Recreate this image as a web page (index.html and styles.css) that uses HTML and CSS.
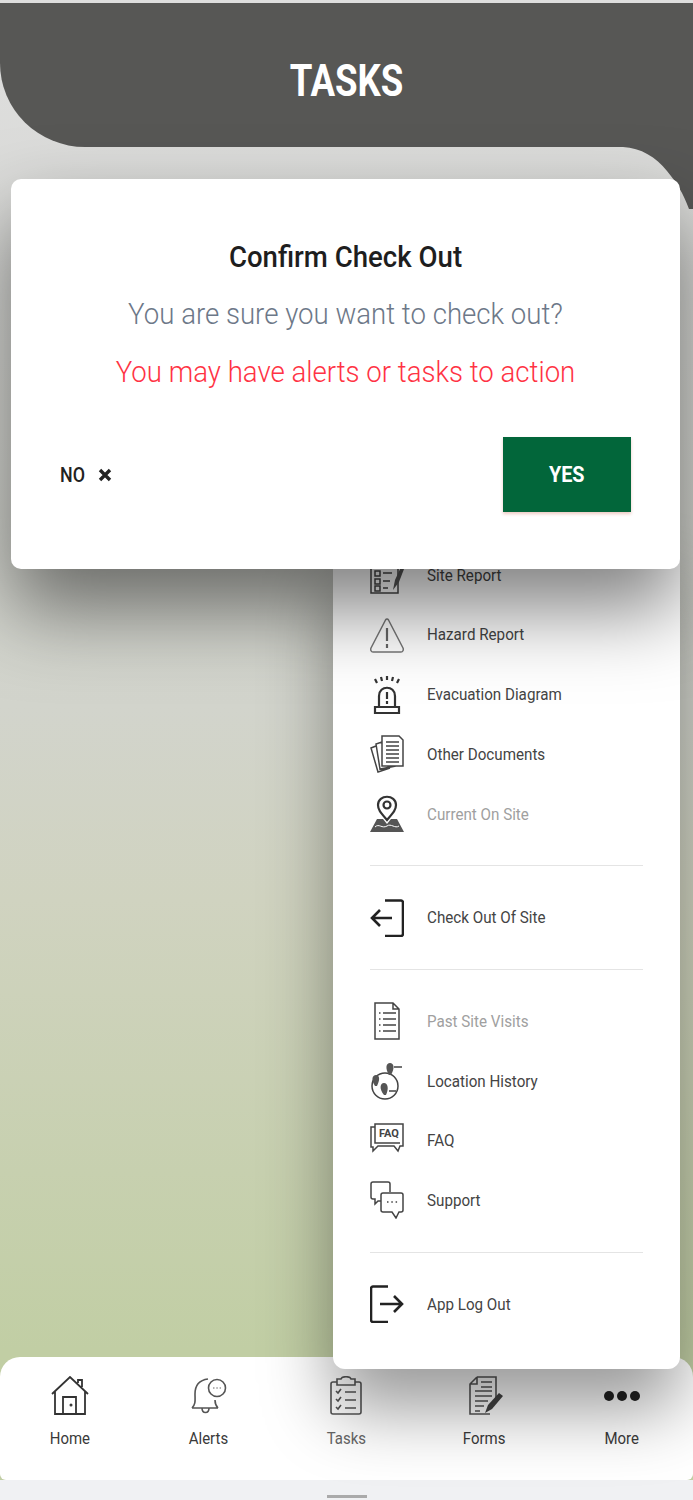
FILE: index.html
```html
<!DOCTYPE html>
<html lang="en">
<head>
  <meta charset="UTF-8">
  <meta name="viewport" content="width=device-width, initial-scale=1">
  <title>Tasks</title>
  <link rel="stylesheet" href="styles.css">
</head>
<body>
<div class="app">

  <header class="header">
    <h1 class="header-title"><span>TASKS</span></h1>
    <svg class="header-tail" width="70" height="63" viewBox="0 0 70 63"><path d="M0 0H70V62H66C60 46 54 36 44 24C33 10 18 1 0 0Z"/></svg>
  </header>

  <main class="content"></main>

  <!-- bottom tabs -->
  <nav class="tabs">
    <a class="tab">
      <svg class="tab-icon" width="38" height="40" viewBox="0 0 38 40"><path d="M1 18L19 1L37 18M4 15V38H34V15M12 38V21H25V38M27 7V4H31V11"/><circle cx="20" cy="29" r=".6"/></svg>
      <span>Home</span>
    </a>
    <a class="tab">
      <svg class="tab-icon tab-icon-soft" width="38" height="40" viewBox="0 0 38 40"><path d="M3 32C7 28 6 24 6 18C6 9 11 4 19 3M3 32H29M26 24C26 28 27 30 29 32M13 32C13 38 20 38 20 32"/><circle cx="28" cy="12" r="8.500"/><path class="dots" d="M24 12H25.500M27.300 12H28.800M30.600 12H32"/></svg>
      <span>Alerts</span>
    </a>
    <a class="tab tab-dim">
      <svg class="tab-icon tab-icon-soft" width="38" height="40" viewBox="0 0 38 40"><path d="M10 6H6C5 6 4 7 4 8V36C4 37 5 38 6 38H32C33 38 34 37 34 36V8C34 7 33 6 32 6H28M10 3H14C15 0 23 0 24 3H28V9H10ZM9 15L11 17L14 13M9 23L11 25L14 21M9 31L11 33L14 29M18 16H29M18 24H29M18 32H29"/></svg>
      <span>Tasks</span>
    </a>
    <a class="tab">
      <svg class="tab-icon tab-icon-soft" width="38" height="40" viewBox="0 0 38 40"><path d="M12 1H31V22M12 1L5 8V38H25M12 1V8H5M16 6H27M16 11H27M10 15H27M10 20H27M10 25H23M10 30H19M10 35H15"/><path class="solid" d="M20 37L23 29L34 17L38 20L27 33Z"/></svg>
      <span>Forms</span>
    </a>
    <a class="tab">
      <svg class="tab-icon" width="38" height="40" viewBox="0 0 38 40"><circle class="solid" cx="6" cy="20" r="5"/><circle class="solid" cx="19" cy="20" r="5"/><circle class="solid" cx="32" cy="20" r="5"/></svg>
      <span>More</span>
    </a>
  </nav>

  <div class="home-bar"><div class="home-grabber"></div></div>

  <!-- more menu, opened over the page -->
  <div class="menu">
    <a class="menu-item">
      <svg class="menu-icon" width="34" height="38" viewBox="0 0 34 38"><path d="M1 1H28V37H1ZM5 15H10V20H5ZM5 23H10V28H5ZM5 30H10V35H5ZM5 7H10V12H5ZM13 9H24M13 17H22M13 25H20M13 32H18"/><path class="solid" d="M23 34L25 24L31 11L34 13L29 26Z"/></svg>
      <span>Site Report</span>
    </a>
    <a class="menu-item">
      <svg class="menu-icon menu-icon-grey" width="34" height="36" viewBox="0 0 34 36"><path d="M15.500 3C16.300 1.700 17.700 1.700 18.500 3L33 31C33.800 33 32.800 35 31 35H3C1.200 35 .2 33 1 31Z"/><path class="thick" d="M17 11V24M17 27V31"/></svg>
      <span>Hazard Report</span>
    </a>
    <a class="menu-item">
      <svg class="menu-icon" width="34" height="38" viewBox="0 0 34 38"><path class="thick" d="M9 30V20C9 9 25 9 25 20V30M5 31H29V37H5ZM5 3L7 7M11 1L12 5M17 0V4M23 1L22 5M29 3L27 7"/><path class="thick" d="M17 16V23M17 25V28"/></svg>
      <span>Evacuation Diagram</span>
    </a>
    <a class="menu-item">
      <svg class="menu-icon" width="34" height="38" viewBox="0 0 34 38"><path d="M12 1H29L33 5V31H12ZM16 7H29M16 11H29M16 15H29M16 19H29M16 23H29M16 27H29M12 7L6 9L10 34L26 31M6 11L1 13L8 37L20 33"/></svg>
      <span>Other Documents</span>
    </a>
    <a class="menu-item menu-item-dim">
      <svg class="menu-icon" width="34" height="38" viewBox="0 0 34 38"><path class="thick" d="M17 25C11 18 8 15 8 10C8 -1 26 -1 26 10C26 15 23 18 17 25Z"/><circle class="thick" cx="17" cy="10" r="3.500"/><path class="solid" d="M7 24H13L17 29L21 24H27L34 37H0Z"/><path class="gap" d="M5 32C9 28 12 34 17 31C21 28 25 34 29 31"/></svg>
      <span>Current On Site</span>
    </a>

    <div class="menu-divider"></div>

    <a class="menu-item">
      <svg class="menu-icon menu-icon-bold" width="34" height="38" viewBox="0 0 34 38"><path d="M15 1.500H31C32 1.500 33 2.500 33 3.500V35C33 36 32 37 31 37H15M2 19H22M10 11L2 19L10 27"/></svg>
      <span>Check Out Of Site</span>
    </a>

    <div class="menu-divider"></div>

    <a class="menu-item menu-item-dim">
      <svg class="menu-icon" width="34" height="38" viewBox="0 0 34 38"><path d="M5 1H23L29 7V37H5ZM23 1V7H29M9 11H10.500M9 17H10.500M9 23H10.500M9 29H10.500M13 11H26M13 17H26M13 23H26M13 29H26"/></svg>
      <span>Past Site Visits</span>
    </a>
    <a class="menu-item">
      <svg class="menu-icon" width="34" height="38" viewBox="0 0 34 38"><circle cx="15" cy="24" r="13"/><path class="solid" d="M19 13C15 6 16 1 20 1C24 1 25 6 21 13ZM5 24C1 18 2 13 6 13C10 13 10 18 7 24ZM14 33C9 27 10 21 14 21C18 21 19 27 16 33Z"/><path d="M24 5H32M19 29H26"/></svg>
      <span>Location History</span>
    </a>
    <a class="menu-item">
      <svg class="menu-icon" width="34" height="38" viewBox="0 0 34 38"><path d="M5 2H33V24H30L28 29L24 24H8L3 29V25H1V5H5ZM5 2V21H30"/><text class="faq-text" x="19" y="15">FAQ</text></svg>
      <span>FAQ</span>
    </a>
    <a class="menu-item">
      <svg class="menu-icon" width="34" height="38" viewBox="0 0 34 38"><path d="M11 20H8L5 23V18H3C2 18 1 17 1 16V3C1 2 2 1 3 1H18C19 1 20 2 20 3V11M13 12H31C32 12 33 13 33 14V29C33 30 32 31 31 31H29L26 37L22 31H13C12 31 11 30 11 29V14C11 13 12 12 13 12ZM17 21H18.500M21.300 21H22.800M25.600 21H27.100"/></svg>
      <span>Support</span>
    </a>

    <div class="menu-divider"></div>

    <a class="menu-item">
      <svg class="menu-icon menu-icon-bold" width="34" height="38" viewBox="0 0 34 38"><path d="M18 1.500H3C2 1.500 1 2.500 1 3.500V35C1 36 2 37 3 37H18M10 19H32M24 11L32 19L24 27"/></svg>
      <span>App Log Out</span>
    </a>
  </div>

  <!-- confirm dialog -->
  <div class="modal">
    <h2 class="modal-title">Confirm Check Out</h2>
    <p class="modal-text">You are sure you want to check out?</p>
    <p class="modal-warning">You may have alerts or tasks to action</p>
    <div class="modal-actions">
      <button class="btn-no">
        <span class="btn-no-label">NO</span>
        <svg class="btn-no-x" width="14" height="14" viewBox="0 0 14 14"><path d="M2 2L12 12M12 2L2 12"/></svg>
      </button>
      <button class="btn-yes"><span>YES</span></button>
    </div>
  </div>

</div>
</body>
</html>
```

FILE: styles.css
```css
* {
  box-sizing: border-box;
}
body {
  margin: 0;
  font-family: 'Roboto', sans-serif;
  color: #333;
}
.app {
  position: relative;
  width: 693px;
  height: 1500px;
  overflow: hidden;
  display: flex;
  flex-direction: column;
  padding-top: 3px;
  background: linear-gradient(180deg, #dedede 0%, #d2d4cc 47%, #d0d3c0 60%, #c1cea4 90%);
}
.header {
  position: relative;
  height: 144px;
  flex: none;
  background: #575755;
  border-bottom-left-radius: 85px 84px;
  display: flex;
  justify-content: center;
}
.header-title {
  margin: 0;
  padding-top: 58px;
  font-size: 36.6px;
  line-height: 42px;
  font-weight: 700;
  color: #fff;
}
.header-title span {
  display: block;
  transform: scaleY(1.2);
}
.header-tail {
  position: absolute;
  top: 100%;
  right: 0;
  fill: #575755;
}
.content {
  flex: 1;
}

/* tabs */
.tabs {
  flex: none;
  height: 123px;
  background: #fff;
  border-radius: 20px 20px 6px 6px;
  display: flex;
  justify-content: space-between;
  padding: 19px 52px 0 51px;
}
.tab {
  width: 38px;
  display: flex;
  flex-direction: column;
  align-items: center;
  gap: 13px;
  font-size: 16.3px;
  color: #3a3a3a;
}
.tab span {
  display: inline-block;
  white-space: nowrap;
  line-height: 20px;
  transform: scaleX(0.92);
}
.tab-dim span {
  color: #666;
}
.tab-icon {
  flex: none;
  fill: none;
  stroke: #333;
  stroke-width: 1.8;
}
.tab-icon-soft {
  stroke: #555;
  stroke-width: 1.6;
}
.tab-icon .solid {
  fill: #222;
  stroke: none;
}
.tab-icon-soft .solid {
  fill: #444;
}
.tab-icon .dots {
  stroke: #999;
}
.home-bar {
  flex: none;
  height: 20px;
  background: #f0f1f3;
  display: flex;
  justify-content: center;
  align-items: flex-end;
  padding-bottom: 2px;
}
.home-grabber {
  width: 40px;
  height: 3px;
  background: #aaa;
}

/* more menu */
.menu {
  position: absolute;
  right: 13px;
  bottom: 131px;
  width: 347px;
  padding: 0 37px 35px;
  background: #fff;
  border-radius: 0 0 12px 12px;
  box-shadow: 0 40px 70px rgba(0, 0, 0, 0.4);
}
.menu-item {
  display: flex;
  align-items: center;
  gap: 23px;
  height: 59.7px;
  font-size: 16.5px;
  color: #444;
}
.menu-item span {
  white-space: nowrap;
  transform: scaleX(0.92);
  transform-origin: left center;
}
.menu-item-dim {
  color: #a0a0a0;
}
.menu-icon {
  flex: none;
  fill: none;
  stroke: #444;
  stroke-width: 1.5;
}
.menu-icon .solid {
  fill: #555;
  stroke: none;
}
.menu-icon .gap {
  stroke: #fff;
  stroke-width: 1;
}
.menu-icon .thick {
  stroke: #333;
  stroke-width: 2.2;
}
.menu-icon-grey {
  stroke: #777;
}
.menu-icon-grey .thick {
  stroke: #666;
}
.menu-icon-bold {
  stroke: #222;
  stroke-width: 2.6;
}
.faq-text {
  font-family: 'Roboto', sans-serif;
  font-size: 11px;
  font-weight: 700;
  text-anchor: middle;
  fill: #444;
  stroke: none;
}
.menu-divider {
  height: 1px;
  margin: 21.5px 0;
  background: #e4e4e4;
}

/* confirm dialog */
.modal {
  position: absolute;
  top: 179px;
  left: 11px;
  width: 669px;
  height: 390px;
  padding: 57px 49px 0;
  background: #fff;
  border-radius: 10px;
  box-shadow: 0 40px 80px rgba(0, 0, 0, 0.5);
  text-align: center;
}
.modal-title {
  margin: 0;
  font-size: 30px;
  line-height: 42px;
  font-weight: 500;
  color: #1e1e1e;
  transform: scaleX(0.92);
}
.modal-text {
  margin: 15px 0 0;
  font-size: 30px;
  line-height: 42px;
  font-weight: 300;
  color: #6d7888;
  transform: scaleX(0.92);
}
.modal-warning {
  margin: 16px 0 0;
  font-size: 30px;
  line-height: 42px;
  font-weight: 300;
  color: #ff3344;
  transform: scaleX(0.92);
}
.modal-actions {
  display: flex;
  justify-content: space-between;
  align-items: center;
  margin-top: 44px;
}
.btn-no {
  display: flex;
  align-items: center;
  border: none;
  background: none;
  padding: 0;
  font: 500 21px 'Roboto', sans-serif;
  color: #222;
}
.btn-no-label {
  width: 38px;
  text-align: left;
  transform: scaleX(0.85);
  transform-origin: left center;
}
.btn-no-x {
  fill: none;
  stroke: #222;
  stroke-width: 3.4;
}
.btn-yes {
  width: 128px;
  height: 75px;
  border: none;
  background: #02663a;
  color: #fff;
  font: 700 22px 'Roboto', sans-serif;
  box-shadow: 0 2px 3px rgba(200, 80, 60, 0.3);
}
.btn-yes span {
  display: inline-block;
  transform: scaleX(0.9);
}
```
